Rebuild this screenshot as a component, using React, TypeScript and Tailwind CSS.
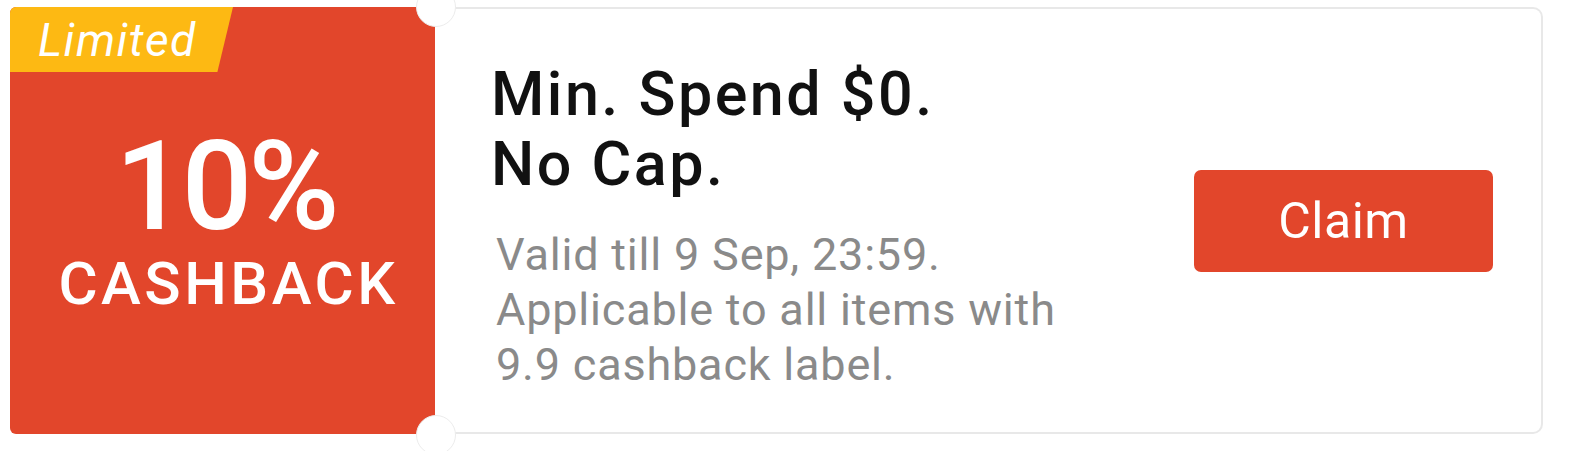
import React from "react";

export default function App() {
  return (
    <div
      className="w-[1593px] h-[451px] bg-white pt-[7px] pl-[10px]"
      style={{ fontFamily: "Roboto, 'Noto Sans', sans-serif" }}
    >
      <div className="relative flex h-[427px] w-[1533px]">
        {/* Left red panel */}
        <div className="relative flex w-[425px] shrink-0 flex-col items-center justify-center rounded-l-[6px] bg-[#e2462b] text-white">
          <div className="-mt-[2px] pl-[6px] text-[124px] font-medium leading-none tracking-[-4px]">10%</div>
          <div className="mt-[5px] pl-[12px] text-[60px] font-medium leading-none tracking-[3.5px]">CASHBACK</div>
          {/* Limited badge */}
          <div
            className="absolute left-0 top-0 h-[65px] w-[223px] rounded-tl-[6px] bg-[#fdb913]"
            style={{ clipPath: "polygon(0 0, 100% 0, 93% 100%, 0 100%)" }}
          >
            <div className="pl-[28px] pt-[10px] text-[46px] italic leading-none tracking-[1.5px] text-white">Limited</div>
          </div>
        </div>
        {/* Right section */}
        <div className="flex flex-1 items-start justify-between rounded-r-[10px] border-y-2 border-r-2 border-[#e8e8e8] pl-[56px] pr-[48px]">
          <div className="pt-[50px]">
            <div className="text-[61px] font-medium leading-[70px] tracking-[2.5px] text-[#111111]">
              <div>Min. Spend $0.</div>
              <div>No Cap.</div>
            </div>
            <div className="mt-[28px] pl-[5px] text-[45px] leading-[55px] tracking-[0.8px] text-[#8a8a8a]">
              <div>Valid till 9 Sep, 23:59.</div>
              <div>Applicable to all items with</div>
              <div>9.9 cashback label.</div>
            </div>
          </div>
          <div className="self-center">
            <button className="flex h-[102px] w-[299px] items-center justify-center rounded-[7px] bg-[#e2462b] text-[50px] leading-none tracking-[0.5px] text-white">
              Claim
            </button>
          </div>
        </div>
        {/* Notches */}
        <div className="absolute left-[406px] top-[-20px] h-[40px] w-[40px] rounded-full border border-[#ececec] bg-white" />
        <div className="absolute left-[406px] bottom-[-21px] h-[40px] w-[40px] rounded-full border border-[#ececec] bg-white" />
      </div>
    </div>
  );
}
